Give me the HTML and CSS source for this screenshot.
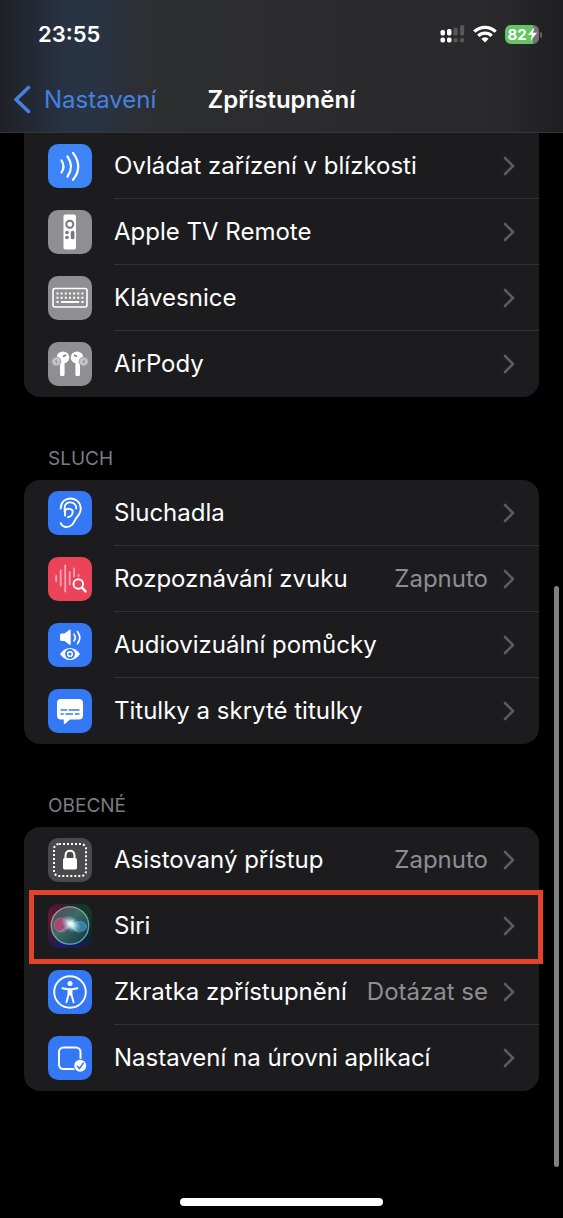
FILE: index.html
```html
<!DOCTYPE html>
<html lang="cs">
<head>
<meta charset="utf-8">
<meta name="viewport" content="width=device-width, initial-scale=1">
<title>Zpřístupnění</title>
<link rel="stylesheet" href="styles.css">
</head>
<body>
<svg class="defs" width="0" height="0" aria-hidden="true">
  <symbol id="chevron" viewBox="0 0 12 20"><path d="M2 2l8 8L2 18" fill="none" stroke="currentColor" stroke-width="2.600" stroke-linecap="round" stroke-linejoin="round"/></symbol>
</svg>
<div class="screen">
  <header class="header">
    <div class="status">
      <time class="clock">23:55</time>
      <div class="indicators">
        <svg class="signal" viewBox="0 0 25 18" aria-hidden="true">
          <g fill="#fff"><rect x="0.500" y="5" width="4.500" height="5.500" rx="1.800"/><rect x="7" y="4" width="4.500" height="6.500" rx="1.800"/><rect x="0.500" y="12.500" width="4.500" height="5" rx="1.800"/><rect x="7" y="12.500" width="4.500" height="5" rx="1.800"/></g>
          <g fill="#57575a"><rect x="13.500" y="2.500" width="4.200" height="8" rx="1.500"/><rect x="20" y="0" width="4.200" height="10.500" rx="1.500"/><rect x="13.500" y="13" width="4.200" height="4.500" rx="1.800"/><rect x="20" y="13" width="4.200" height="4.500" rx="1.800"/></g>
        </svg>
        <svg class="wifi" viewBox="0 0 24 18" aria-hidden="true">
          <g fill="none" stroke="#fff" stroke-width="3.300"><path d="M1.300 6.700a15.200 15.200 0 0 1 21.400 0"/><path d="M5.300 10.900a9.500 9.500 0 0 1 13.400 0"/></g>
          <path d="M12 17.500l-3.700-3.700a5.300 5.300 0 0 1 7.400 0z" fill="#fff"/>
        </svg>
        <div class="battery"><span class="level">82</span>
          <svg class="bolt" viewBox="0 0 9 14" aria-hidden="true"><path d="M6.500 0L0 8h4L2.500 14 9 5.700H5z" fill="#fff"/></svg>
        </div>
      </div>
    </div>
    <nav class="nav">
      <a class="back" href="#"><svg viewBox="0 0 18 30" aria-hidden="true"><path d="M14.500 2.500L2 14.500l12.500 12" fill="none" stroke="currentColor" stroke-width="3.600" stroke-linecap="round" stroke-linejoin="round"/></svg>Nastavení</a>
      <h1 class="title">Zpřístupnění</h1>
    </nav>
  </header>

  <main class="content">
    <ul class="card continued">
      <li class="row"><a class="link" href="#">
        <svg class="icon sky" viewBox="0 0 44 44" aria-hidden="true"><g fill="none" stroke="#fff" stroke-width="2.200" stroke-linecap="round"><path d="M13.500 16.500q4 6 0 12"/><path d="M19.500 12.500q7 10 0 20"/><path d="M25 8.800q10.500 13.600 0 27"/></g></svg>
        <span class="label">Ovládat zařízení v blízkosti</span><svg class="chevron"><use href="#chevron"/></svg></a></li>
      <li class="row"><a class="link" href="#">
        <svg class="icon gray" viewBox="0 0 44 44" aria-hidden="true"><rect x="15.500" y="4.500" width="12.500" height="35" rx="1.800" fill="#fff"/><circle cx="21.800" cy="14.300" r="3.500" fill="none" stroke="#77777c" stroke-width="2"/><g fill="#77777c"><circle cx="19" cy="22.500" r="1.800"/><circle cx="19" cy="27.500" r="1.800"/><rect x="22.800" y="20.700" width="3.600" height="8.600" rx="1.700"/></g></svg>
        <span class="label">Apple TV Remote</span><svg class="chevron"><use href="#chevron"/></svg></a></li>
      <li class="row"><a class="link" href="#">
        <svg class="icon gray" viewBox="0 0 44 44" aria-hidden="true"><rect x="5" y="12.500" width="34" height="18.500" rx="2" fill="none" stroke="#fff" stroke-width="1.600"/><g stroke="#fff" stroke-width="2" fill="none"><path d="M8.500 17.500h27M8.500 21.700h27" stroke-dasharray="2 2.150"/><path d="M8.500 26h2.200M13 26h18.200M33.400 26h2.200"/></g></svg>
        <span class="label">Klávesnice</span><svg class="chevron"><use href="#chevron"/></svg></a></li>
      <li class="row"><a class="link" href="#">
        <svg class="icon gray" viewBox="0 0 44 44" aria-hidden="true"><g id="bud"><path d="M12 20h4.600v12.500q0 1.500-1.500 1.500h-1.600Q12 34 12 32.500z" fill="#fff"/><ellipse cx="15" cy="15.500" rx="6.300" ry="6" fill="#fff"/><circle cx="8.300" cy="19.500" r="4.600" fill="#c4c4c8" stroke="#8e8e93" stroke-width=".7"/><path d="M7.800 17.800l.8 3.400" stroke="#929297" stroke-width="1.400"/><path d="M15 14.500l3-1.500" stroke="#77777c" stroke-width="1.500"/></g><use href="#bud" transform="translate(44 0) scale(-1 1)"/></svg>
        <span class="label">AirPody</span><svg class="chevron"><use href="#chevron"/></svg></a></li>
    </ul>

    <h2 class="heading">SLUCH</h2>
    <ul class="card">
      <li class="row"><a class="link" href="#">
        <svg class="icon blue" viewBox="0 0 44 44" aria-hidden="true"><g fill="none" stroke="#fff" stroke-width="1.900" stroke-linecap="round" stroke-linejoin="round"><path d="M12.700 17.500C12.700 4 32.700 4 32.700 18c0 4.500-3 7-5 10C25.500 31.500 24.500 36 18.500 36c-3 0-4.800-1.500-5.700-3.800"/><path d="M16.700 21v-4.500c0-7 11.500-7 11.500 1"/><path d="M17 19.500c2-2.700 8-2.200 7.700 1.500-.2 3.300-2.500 4.800-4.800 5.200"/><path d="M17 20v4.500"/></g></svg>
        <span class="label">Sluchadla</span><svg class="chevron"><use href="#chevron"/></svg></a></li>
      <li class="row"><a class="link" href="#">
        <svg class="icon red" viewBox="0 0 44 44" aria-hidden="true"><g stroke="#f8a5b3" stroke-width="1.800" stroke-linecap="round"><path d="M8.200 19v5M12.700 13.500v15M17.200 8.500v26M21.700 15v12.500M26 11.500v8M30.500 18v1"/></g><circle cx="30.300" cy="27" r="4.800" fill="none" stroke="#fff" stroke-width="1.900"/><path d="M34 30.700l3.500 3.600" stroke="#fff" stroke-width="2.400" stroke-linecap="round"/></svg>
        <span class="label">Rozpoznávání zvuku</span><span class="value">Zapnuto</span><svg class="chevron"><use href="#chevron"/></svg></a></li>
      <li class="row"><a class="link" href="#">
        <svg class="icon blue" viewBox="0 0 44 44" aria-hidden="true"><path d="M13.500 10.500h3l5-3.700q1.200-.8 1.200.5v14q0 1.300-1.200.5l-5-3.800h-3q-1.500 0-1.500-1.500V12q0-1.500 1.500-1.500z" fill="#fff"/><g fill="none" stroke="#fff" stroke-width="1.700" stroke-linecap="round"><path d="M26 11.200q2.500 3.300 0 6.600M29.500 8.700q4.500 6 0 12"/></g><path d="M12 31c5.500-8 14.500-8 20 0-5.500 8-14.500 8-20 0z" fill="#fff"/><circle cx="22" cy="31" r="4" fill="none" stroke="#3478f6" stroke-width="1.800"/><circle cx="22" cy="31" r="1.600" fill="#3478f6"/></svg>
        <span class="label">Audiovizuální pomůcky</span><svg class="chevron"><use href="#chevron"/></svg></a></li>
      <li class="row"><a class="link" href="#">
        <svg class="icon blue" viewBox="0 0 44 44" aria-hidden="true"><path d="M13 10h18q4 0 4 4v12.500q0 4-4 4h-9l-4.800 4.200q-1.400 1-1.400-.7v-3.500H13q-4 0-4-4V14q0-4 4-4z" fill="#fff"/><path d="M12.500 21h6.500M20.500 21h11M12.500 25h3.200M17.500 25h7.500M27 25h4.500" stroke="#3478f6" stroke-width="1.600"/></svg>
        <span class="label">Titulky a skryté titulky</span><svg class="chevron"><use href="#chevron"/></svg></a></li>
    </ul>

    <h2 class="heading">OBECNÉ</h2>
    <ul class="card">
      <li class="row"><a class="link" href="#">
        <svg class="icon dark" viewBox="0 0 44 44" aria-hidden="true"><rect x="6" y="6" width="32" height="32" rx="5" fill="none" stroke="#fff" stroke-width="2" stroke-dasharray="2 2"/><rect x="15" y="20" width="14" height="11.500" rx="1.800" fill="#fff"/><path d="M17.500 21v-3.500c0-6.500 9-6.500 9 0V21" fill="none" stroke="#fff" stroke-width="2"/></svg>
        <span class="label">Asistovaný přístup</span><span class="value">Zapnuto</span><svg class="chevron"><use href="#chevron"/></svg></a></li>
      <li class="row highlighted"><a class="link" href="#">
        <svg class="icon siri" viewBox="0 0 44 44" aria-hidden="true">
          <defs>
            <radialGradient id="glow"><stop offset="0" stop-color="#fff"/><stop offset=".25" stop-color="#f0ffff" stop-opacity=".85"/><stop offset="1" stop-color="#8fd6dd" stop-opacity="0"/></radialGradient>
            <linearGradient id="orb" x1="0" y1="0" x2="1" y2="1"><stop offset="0" stop-color="#5a4658"/><stop offset=".45" stop-color="#3b6b66"/><stop offset="1" stop-color="#10303f"/></linearGradient>
            <linearGradient id="rim" x1="0" y1="0" x2="1" y2="1"><stop offset="0" stop-color="#b88b9c"/><stop offset=".5" stop-color="#6fae9d"/><stop offset="1" stop-color="#4d9fc0"/></linearGradient>
          </defs>
          <circle cx="22" cy="21.500" r="18.700" fill="url(#orb)" stroke="url(#rim)" stroke-width="1.300"/>
          <ellipse cx="13.500" cy="21" rx="7.500" ry="6.800" fill="#c83f78" stroke="#df82a6" stroke-width=".7" opacity=".75"/>
          <ellipse cx="31.500" cy="22.500" rx="7" ry="5" fill="#3c9bd0" stroke="#77c7e8" stroke-width=".7" opacity=".65"/>
          <path d="M9 28c8-1 10-12 18-13-3 5-3 7 5 15-4-2-7-6-10-6-5 0-7 5-13 4z" fill="#75b8cb" opacity=".55"/>
          <ellipse cx="23" cy="20" rx="11" ry="7.500" fill="url(#glow)" transform="rotate(35 23 20)"/>
        </svg>
        <span class="label">Siri</span><svg class="chevron"><use href="#chevron"/></svg></a></li>
      <li class="row"><a class="link" href="#">
        <svg class="icon blue" viewBox="0 0 44 44" aria-hidden="true"><circle cx="22" cy="22" r="15.800" fill="none" stroke="#fff" stroke-width="1.900"/><circle cx="22" cy="13.600" r="2.500" fill="#fff"/><path d="M14.500 18.300l5.300 1h4.400l5.300-1M20.600 20v4.500l-2.200 7.800M23.400 20v4.500l2.200 7.800" fill="none" stroke="#fff" stroke-width="1.900" stroke-linecap="round" stroke-linejoin="round"/><path d="M19.800 19h4.400v6.500h-4.400z" fill="#fff"/></svg>
        <span class="label">Zkratka zpřístupnění</span><span class="value">Dotázat se</span><svg class="chevron"><use href="#chevron"/></svg></a></li>
      <li class="row"><a class="link" href="#">
        <svg class="icon blue" viewBox="0 0 44 44" aria-hidden="true"><rect x="11" y="11.500" width="21.500" height="21.500" rx="4.500" fill="none" stroke="#fff" stroke-width="2"/><circle cx="32.200" cy="29.800" r="7" fill="#3478f6"/><circle cx="32.200" cy="29.800" r="6" fill="#fff"/><path d="M29.300 30.200l2.200 2.300 3.800-5.400" fill="none" stroke="#3478f6" stroke-width="1.500" stroke-linecap="round"/></svg>
        <span class="label">Nastavení na úrovni aplikací</span><svg class="chevron"><use href="#chevron"/></svg></a></li>
    </ul>
    <div class="scrollbar"></div>
  </main>
  <div class="home"></div>
</div>
</body>
</html>
```
FILE: styles.css
```css
* { box-sizing: border-box; }
body {
  margin: 0;
  background: #000;
  color: #fff;
  font-family: Inter, "Liberation Sans", sans-serif;
  font-size: 24px;
  line-height: 32px;
}
a { color: inherit; text-decoration: none; }
.defs { position: absolute; }
.screen {
  display: flex;
  flex-direction: column;
  min-height: 100vh;
}
.header {
  background: linear-gradient(90deg, #1f2126 0, #283344 12%, #283344 17%, #2d2e30 27%, #2c2c2e 50%, #29292b 90%, #1e1e20 100%);
  border-bottom: 1px solid #343437;
}
.status {
  display: flex;
  align-items: center;
  justify-content: space-between;
  height: 68px;
  padding: 0 21px 0 38px;
}
.clock { font-size: 22px; font-weight: 600; }
.indicators { display: flex; align-items: center; gap: 8px; }
.signal { width: 25px; height: 18px; }
.wifi { width: 24px; height: 18px; }
.battery {
  position: relative;
  display: flex;
  align-items: center;
  justify-content: center;
  gap: 1px;
  width: 34px;
  height: 19px;
  margin-right: 3px;
  border-radius: 6px;
  background: linear-gradient(90deg, #65c466 82%, #737377 82%);
}
.battery::after {
  content: "";
  position: absolute;
  left: 100%;
  top: 7px;
  width: 2px;
  height: 6px;
  margin-left: 1px;
  border-radius: 0 2px 2px 0;
  background: #6b6060;
}
.level { font-size: 15px; font-weight: 700; line-height: 19px; }
.bolt { width: 9px; height: 14px; }
.nav {
  display: grid;
  grid-template-columns: 1fr auto 1fr;
  align-items: center;
  height: 64px;
  padding: 0 14px;
}
.back { display: flex; align-items: center; gap: 12px; color: #4681e0; }
.back svg { width: 18px; height: 30px; }
.title { margin: 0; font-size: 24px; font-weight: 600; }
.content { position: relative; padding: 0 24px; }
.card {
  margin: 0;
  padding: 0;
  list-style: none;
  background: #1c1c1e;
  border-radius: 16px;
}
.continued { border-radius: 0 0 16px 16px; }
.row { position: relative; }
.link {
  display: flex;
  align-items: center;
  height: 66px;
  padding: 0 24px;
}
.row + .row::before {
  content: "";
  position: absolute;
  top: -1px;
  left: 90px;
  right: 0;
  height: 1px;
  background: #323235;
}
.row.highlighted + .row::before { display: none; }
.icon {
  flex: none;
  width: 44px;
  height: 44px;
  margin-right: 22px;
  border-radius: 10px;
}
.sky { background: #3d84f7; }
.blue { background: #3478f6; }
.gray { background: #8e8e93; }
.red { background: #eb445a; }
.dark { background: #4a4a4c; }
.siri {
  background: radial-gradient(circle at 100% 0, #143d2e, transparent 60%), radial-gradient(circle at 0 25%, #6c1535, transparent 65%), radial-gradient(circle at 35% 100%, #1b1b66, transparent 60%), #10212f;
}
.label { flex: 1; white-space: nowrap; }
.value { color: #8e8e93; white-space: nowrap; }
.chevron { flex: none; width: 12px; height: 20px; margin-left: 15px; color: #5c5c60; }
.heading {
  margin: 0;
  padding: 46px 24px 5px;
  color: #7c7c82;
  font-size: 19px;
  font-weight: 400;
}
.highlighted::after {
  content: "";
  position: absolute;
  inset: -3px -4px -5px 5px;
  z-index: 1;
  border: 5px solid #e3432a;
}
.scrollbar {
  position: absolute;
  top: 453px;
  right: 4px;
  width: 5px;
  height: 581px;
  border-radius: 3px;
  background: #808080;
}
.home {
  width: 36%;
  height: 8px;
  margin: auto auto 12px;
  border-radius: 4px;
  background: #fff;
}
```
